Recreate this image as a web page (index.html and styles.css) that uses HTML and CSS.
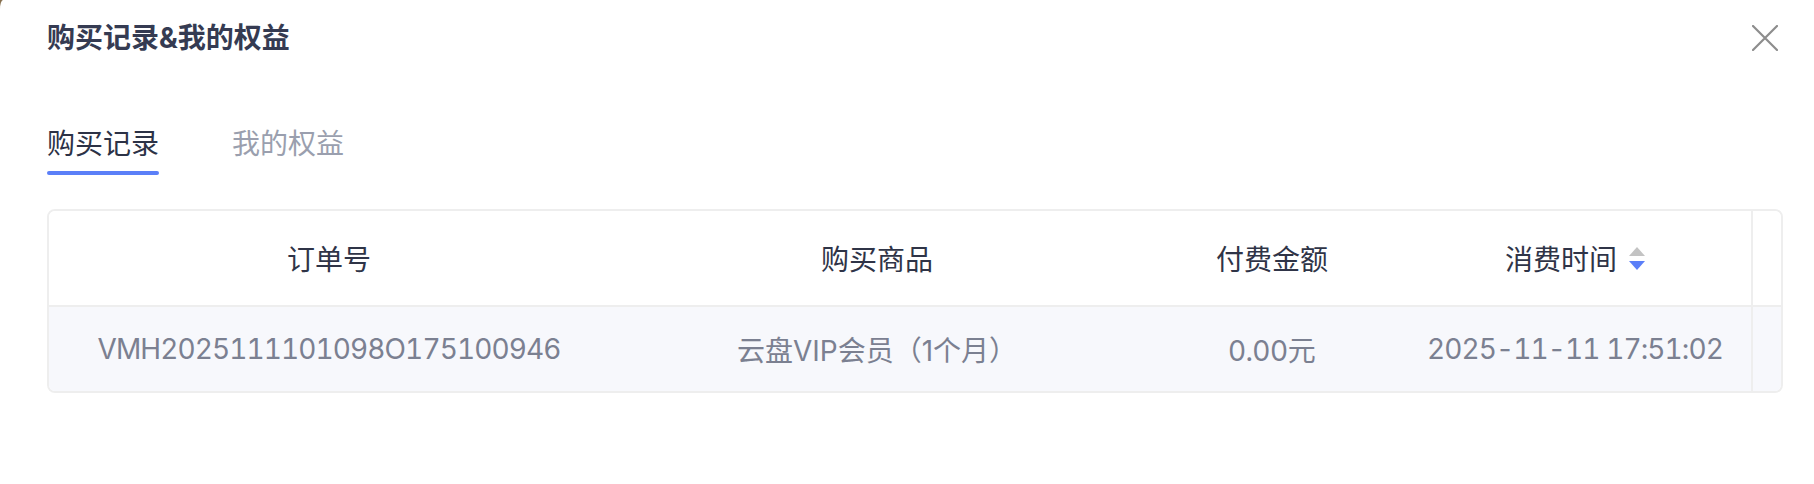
FILE: index.html
```html
<!DOCTYPE html>
<html lang="zh-CN">
<head>
<meta charset="utf-8">
<title>购买记录&amp;我的权益</title>
<link rel="stylesheet" href="styles.css">
</head>
<body>
<div class="dialog">
  <div class="dialog-header">
    <h1 class="dialog-title">购买记录&amp;我的权益</h1>
    <button class="close-btn" aria-label="关闭">
      <svg width="26" height="26" viewBox="0 0 26 26"><path d="M1 1 L25 25 M25 1 L1 25" stroke="#8d8d8d" stroke-width="2.2" stroke-linecap="round" fill="none"/></svg>
    </button>
  </div>
  <div class="tabs">
    <div class="tab active">购买记录</div>
    <div class="tab">我的权益</div>
  </div>
  <div class="table">
    <div class="row head">
      <div class="cell">订单号</div>
      <div class="cell">购买商品</div>
      <div class="cell">付费金额</div>
      <div class="cell">消费时间<span class="sorter"><span class="tri up"></span><span class="tri down"></span></span></div>
      <div class="cell gutter"></div>
    </div>
    <div class="row body">
      <div class="cell num">VMH2025111101098O175100946</div>
      <div class="cell">云盘VIP会员（1个月）</div>
      <div class="cell">0.00元</div>
      <div class="cell num">2025-11-11 17:51:02</div>
      <div class="cell gutter"></div>
    </div>
  </div>
</div>
</body>
</html>
```
FILE: styles.css
```css
html, body {
  margin: 0;
  padding: 0;
  background: #866f4e;
}
body {
  font-family: Inter, "Noto Sans CJK SC", sans-serif;
}
.dialog {
  background: #ffffff;
  min-height: 484px;
  border-top-left-radius: 3px 9px;
  padding: 0 31px 0 47px;
  box-sizing: border-box;
}
.dialog-header {
  height: 76px;
  display: flex;
  align-items: center;
  justify-content: space-between;
  padding-right: 5px;
}
.dialog-title {
  margin: 0;
  font-size: 28px;
  font-weight: 700;
  color: #353b52;
  line-height: 40px;
}
.close-btn {
  border: 0;
  background: none;
  padding: 0;
  width: 26px;
  height: 26px;
  display: flex;
}
.tabs {
  margin-top: 48px;
  display: flex;
  gap: 73px;
}
.tab {
  font-size: 28px;
  line-height: 40px;
  color: #9a9fae;
  padding-bottom: 11px;
  position: relative;
}
.tab.active {
  color: #2c3246;
}
.tab.active::after {
  content: "";
  position: absolute;
  left: 0;
  right: 0;
  bottom: 0;
  height: 4px;
  border-radius: 2px;
  background: #5b7ff8;
}
.table {
  margin-top: 34px;
  border: 2px solid #eeeeee;
  border-radius: 8px;
  overflow: hidden;
}
.row {
  display: grid;
  grid-template-columns: 560px 536px 254px 1fr 30px;
  align-items: stretch;
}
.row.head {
  height: 94px;
  border-bottom: 2px solid #eeeeee;
  background: #ffffff;
  color: #2f3447;
}
.row.body {
  height: 84px;
  background: #f7f8fc;
  color: #7b8091;
}
.cell {
  display: flex;
  align-items: center;
  justify-content: center;
  font-size: 28px;
  white-space: nowrap;
}
.cell.num {
  font-variant-numeric: tabular-nums;
  letter-spacing: -0.9px;
}
.cell.gutter {
  border-left: 2px solid #eeeeee;
}
.sorter {
  display: inline-flex;
  flex-direction: column;
  gap: 5px;
  margin-left: 12px;
}
.tri {
  width: 0;
  height: 0;
  border-left: 8px solid transparent;
  border-right: 8px solid transparent;
}
.tri.up {
  border-bottom: 9px solid #c3c3c3;
}
.tri.down {
  border-top: 9px solid #5b7ff8;
}
```
